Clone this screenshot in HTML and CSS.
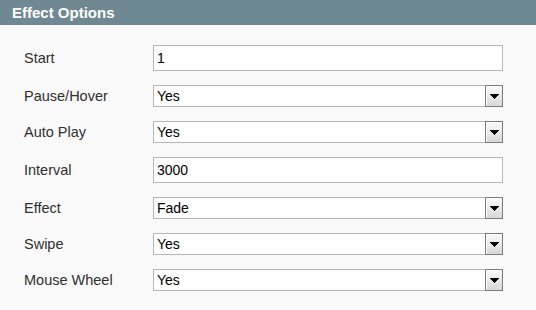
FILE: index.html
```html
<!DOCTYPE html>
<html>
<head>
<meta charset="utf-8">
<link rel="stylesheet" href="styles.css">
</head>
<body>
<div class="panel">
  <div class="head">Effect Options</div>
  <div class="body">
    <div class="row"><div class="label">Start</div><div class="input">1</div></div>
    <div class="row"><div class="label">Pause/Hover</div><div class="select"><span class="val">Yes</span><span class="btn"><svg width="9" height="6" viewBox="0 0 9 6"><path d="M0 0h9v1h-1v1h-1v1h-1v1h-1v1h-1v-1h-1v-1h-1v-1h-1v-1h-1z" fill="#000"/></svg></span></div></div>
    <div class="row"><div class="label">Auto Play</div><div class="select"><span class="val">Yes</span><span class="btn"><svg width="9" height="6" viewBox="0 0 9 6"><path d="M0 0h9v1h-1v1h-1v1h-1v1h-1v1h-1v-1h-1v-1h-1v-1h-1v-1h-1z" fill="#000"/></svg></span></div></div>
    <div class="row"><div class="label">Interval</div><div class="input">3000</div></div>
    <div class="row"><div class="label">Effect</div><div class="select"><span class="val">Fade</span><span class="btn"><svg width="9" height="6" viewBox="0 0 9 6"><path d="M0 0h9v1h-1v1h-1v1h-1v1h-1v1h-1v-1h-1v-1h-1v-1h-1v-1h-1z" fill="#000"/></svg></span></div></div>
    <div class="row"><div class="label">Swipe</div><div class="select"><span class="val">Yes</span><span class="btn"><svg width="9" height="6" viewBox="0 0 9 6"><path d="M0 0h9v1h-1v1h-1v1h-1v1h-1v1h-1v-1h-1v-1h-1v-1h-1v-1h-1z" fill="#000"/></svg></span></div></div>
    <div class="row"><div class="label">Mouse Wheel</div><div class="select"><span class="val">Yes</span><span class="btn"><svg width="9" height="6" viewBox="0 0 9 6"><path d="M0 0h9v1h-1v1h-1v1h-1v1h-1v1h-1v-1h-1v-1h-1v-1h-1v-1h-1z" fill="#000"/></svg></span></div></div>
  </div>
</div>
</body>
</html>
```
FILE: styles.css
```css
html, body {
  margin: 0;
  padding: 0;
  background: #fafafa;
}
body {
  width: 536px;
  height: 310px;
  font-family: "Liberation Sans", Arial, sans-serif;
  font-size: 14px;
}
.head {
  height: 25px;
  background: #6f8992;
  color: #fff;
  font-weight: bold;
  font-size: 15px;
  line-height: 25px;
  padding-left: 12px;
  box-sizing: border-box;
}
.body {
  padding: 20px 0 0 24px;
  display: flex;
  flex-direction: column;
  gap: 14px;
}
.row {
  display: flex;
  align-items: center;
}
.label {
  width: 129px;
  color: #2f2f2f;
  font-size: 14.5px;
}
.input {
  width: 350px;
  height: 26px;
  box-sizing: border-box;
  border: 1px solid #b6b6b6;
  background: #fff;
  color: #000;
  padding-left: 3px;
  line-height: 24px;
}
.select {
  width: 350px;
  height: 22px;
  box-sizing: border-box;
  border: 1px solid #b6b6b6;
  border-right: none;
  background: #fff;
  color: #000;
  display: flex;
  align-items: stretch;
}
.val {
  flex: 1;
  padding-left: 3px;
  line-height: 20px;
}
.btn {
  width: 18px;
  margin: -1px 0;
  box-sizing: border-box;
  border: 1px solid #7b7b7b;
  background: linear-gradient(#fbfbfb, #d8d8d8);
  box-shadow: inset 1px 1px 0 #fff;
  display: flex;
  align-items: center;
  justify-content: center;
  padding-top: 1px;
}
.btn svg {
  display: block;
  width: 9px;
  height: 6px;
}
```
